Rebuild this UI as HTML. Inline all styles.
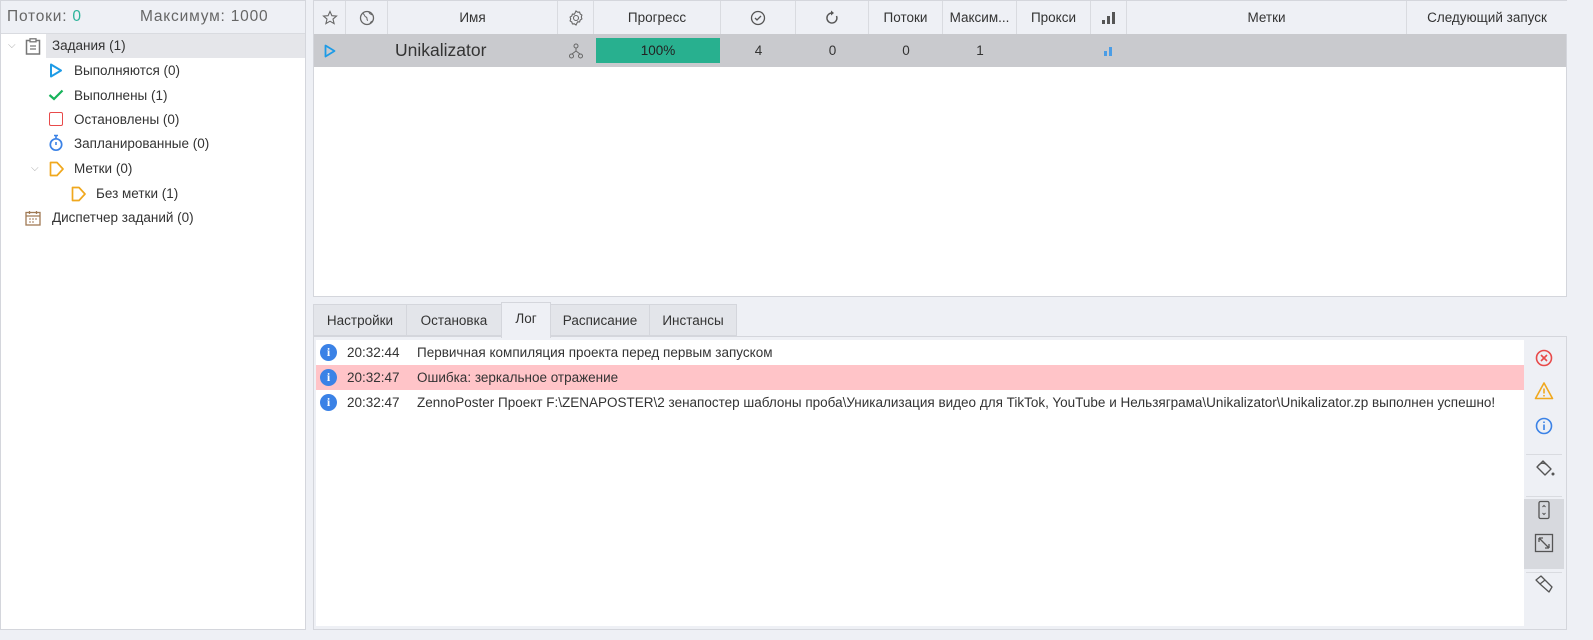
<!DOCTYPE html>
<html><head><meta charset="utf-8"><style>
*{box-sizing:border-box;margin:0;padding:0}
body{width:1593px;height:640px;background:#eef0f5;font-family:"Liberation Sans",sans-serif;font-size:13.5px;color:#333;position:relative;overflow:hidden}
.abs{position:absolute}
#left{left:0;top:0;width:306px;height:630px;border:1px solid #d4d6dc;background:#fff}
#lh{left:1px;top:1px;width:304px;height:33px;background:#eef0f5;border-bottom:1px solid #d9dbe0;font-size:15.5px;color:#666;letter-spacing:.8px}
.ti{position:absolute;height:24px;line-height:24px;font-size:13.5px;color:#333;white-space:nowrap}
#grid{left:313px;top:0;width:1254px;height:297px;border:1px solid #d4d6dc;background:#fff}
.hc{position:absolute;top:0;height:33px;line-height:33px;text-align:center;border-right:1px solid #d9dbe0;background:#eef0f5;font-size:13.5px;color:#333;white-space:nowrap;overflow:hidden}
.rc{position:absolute;top:33px;height:33px;line-height:33px;text-align:center;font-size:13.5px;color:#333}
.tab{position:absolute;top:304px;height:32px;line-height:32px;text-align:center;background:#e3e5ea;border:1px solid #d4d6dc;font-size:13.5px;color:#333}
#log{left:313px;top:336px;width:1254px;height:294px;border:1px solid #d4d6dc;background:#eef0f5}
#lw{left:316px;top:340px;width:1208px;height:286px;background:#fff}
.lr{position:absolute;left:316px;width:1208px;height:24px;line-height:24px;font-size:13.5px;color:#333;white-space:nowrap;overflow:hidden}
.ic{display:inline-block;width:17px;height:17px;border-radius:50%;background:#3b82e6;color:#fff;font-weight:bold;font-size:12px;line-height:17px;text-align:center;position:absolute;left:4px;top:4px;font-family:"Liberation Serif",serif}
</style></head><body>
<div id="left" class="abs"></div>
<div id="lh" class="abs"><span class="abs" style="left:6px;top:7px">Потоки: <span style="color:#2bb39a">0</span></span><span class="abs" style="left:139px;top:7px">Максимум: 1000</span></div>
<div class="abs" style="left:46px;top:34px;width:259px;height:24px;background:#e5e6ea"></div>
<div class="ti" style="left:8px;top:34px;color:#aaa;font-size:10px">⌵</div>
<svg class="abs" style="left:25px;top:38px" width="16" height="17"><rect x="1.5" y="2.5" width="13" height="13.5" fill="none" stroke="#777" stroke-width="1.5"/><rect x="5" y="0.8" width="6" height="3" fill="#fff" stroke="#777" stroke-width="1.3"/><path d="M5 8h6M5 11h6" stroke="#777" stroke-width="1.3"/></svg>
<div class="ti" style="left:52px;top:34px">Задания (1)</div>
<svg class="abs" style="left:49px;top:63px" width="14" height="15"><path d="M2 1.5 L12 7.5 L2 13.5Z" fill="none" stroke="#1e9be6" stroke-width="2" stroke-linejoin="round"/></svg>
<div class="ti" style="left:74px;top:59px">Выполняются (0)</div>
<svg class="abs" style="left:48px;top:89px" width="16" height="12"><path d="M1.5 6 L6 10 L14.5 1.5" fill="none" stroke="#16b35a" stroke-width="2.2"/></svg>
<div class="ti" style="left:74px;top:84px">Выполнены (1)</div>
<div class="abs" style="left:49px;top:112px;width:14px;height:14px;border:1.7px solid #e84a4a;border-radius:2px"></div>
<div class="ti" style="left:74px;top:108px">Остановлены (0)</div>
<svg class="abs" style="left:49px;top:134px" width="14" height="18"><circle cx="7" cy="10.5" r="5.7" fill="none" stroke="#3b82e6" stroke-width="1.7"/><path d="M5 1.5h4M7 2v3M7 8v3" stroke="#3b82e6" stroke-width="1.6"/></svg>
<div class="ti" style="left:74px;top:132px">Запланированные (0)</div>
<div class="ti" style="left:31px;top:157px;color:#aaa;font-size:10px">⌵</div>
<svg class="abs" style="left:49px;top:161px" width="16" height="16"><path d="M1.5 1.5h6.5l6 6.5-6 6.5h-6.5z" fill="none" stroke="#f0a81e" stroke-width="1.7" stroke-linejoin="round"/></svg>
<div class="ti" style="left:74px;top:157px">Метки (0)</div>
<svg class="abs" style="left:71px;top:186px" width="16" height="16"><path d="M1.5 1.5h6.5l6 6.5-6 6.5h-6.5z" fill="none" stroke="#f0a81e" stroke-width="1.7" stroke-linejoin="round"/></svg>
<div class="ti" style="left:96px;top:182px">Без метки (1)</div>
<svg class="abs" style="left:25px;top:210px" width="16" height="16"><rect x="1" y="2.5" width="14" height="12.5" fill="none" stroke="#a07a55" stroke-width="1.3"/><path d="M1 6h14M4.5 1v3M11.5 1v3" stroke="#a07a55" stroke-width="1.3"/><path d="M4 9h2M7 9h2M10 9h2M4 12h2M7 12h2" stroke="#a07a55"/></svg>
<div class="ti" style="left:52px;top:206px">Диспетчер заданий (0)</div>

<div id="grid" class="abs">
<div class="hc" style="left:0;width:32px"><svg width="16" height="16" style="vertical-align:middle"><path d="M8 1.5l1.9 4.2 4.6.4-3.5 3 1.1 4.5L8 11.2l-4.1 2.4 1.1-4.5-3.5-3 4.6-.4z" fill="none" stroke="#666" stroke-width="1.1"/></svg></div>
<div class="hc" style="left:32px;width:42px"><svg width="16" height="16" style="vertical-align:middle"><circle cx="8" cy="8" r="6.5" fill="none" stroke="#666" stroke-width="1.3"/><path d="M4 3.5c2 1 1 3 3 3.5s0 3 2 3.5M10 2c0 2 2 2 3 3M11 14c0-2 2-3 3-3" fill="none" stroke="#666"/></svg></div>
<div class="hc" style="left:74px;width:170px">Имя</div>
<div class="hc" style="left:244px;width:36px"><svg width="16" height="16" style="vertical-align:middle"><path d="M8 1l1.6 1.2 2-.1.6 1.9 1.7 1.1-.6 1.9.6 1.9-1.7 1.1-.6 1.9-2-.1L8 15l-1.6-1.2-2 .1-.6-1.9-1.7-1.1.6-1.9-.6-1.9 1.7-1.1.6-1.9 2 .1z" fill="none" stroke="#666" stroke-width="1.1"/><circle cx="8" cy="8" r="2.5" fill="none" stroke="#666" stroke-width="1.1"/></svg></div>
<div class="hc" style="left:280px;width:127px">Прогресс</div>
<div class="hc" style="left:407px;width:75px"><svg width="16" height="16" style="vertical-align:middle"><circle cx="8" cy="8" r="6.5" fill="none" stroke="#555" stroke-width="1.3"/><path d="M5 8l2 2 4-4" fill="none" stroke="#555" stroke-width="1.3"/></svg></div>
<div class="hc" style="left:482px;width:73px"><svg width="16" height="16" style="vertical-align:middle"><path d="M12.5 6A5 5 0 1 1 8 3" fill="none" stroke="#555" stroke-width="1.4"/><path d="M7 0.5l3 2.5-3 2.5z" fill="#555"/></svg></div>
<div class="hc" style="left:555px;width:74px">Потоки</div>
<div class="hc" style="left:629px;width:74px">Максим...</div>
<div class="hc" style="left:703px;width:74px">Прокси</div>
<div class="hc" style="left:777px;width:36px"><svg width="16" height="14" style="vertical-align:middle"><rect x="1" y="9" width="3" height="4" fill="#555"/><rect x="6" y="5" width="3" height="8" fill="#555"/><rect x="11" y="1" width="3" height="12" fill="#555"/></svg></div>
<div class="hc" style="left:813px;width:280px">Метки</div>
<div class="hc" style="left:1093px;width:160px;border-right:none">Следующий запуск</div>
<div class="abs" style="left:0;top:33px;width:1252px;height:33px;background:#c9cace"></div>
<div class="rc" style="left:0;width:32px"><svg width="12" height="14" style="vertical-align:middle"><path d="M1.5 1.5L10.5 7 1.5 12.5z" fill="none" stroke="#1e9be6" stroke-width="1.8" stroke-linejoin="round"/></svg></div>
<div class="rc" style="left:81px;text-align:left;font-size:17.5px;color:#333">Unikalizator</div>
<div class="rc" style="left:244px;width:36px"><svg width="14" height="16" style="vertical-align:middle"><circle cx="7" cy="3" r="2" fill="none" stroke="#666"/><circle cx="2.5" cy="13" r="2" fill="none" stroke="#666"/><circle cx="11.5" cy="13" r="2" fill="none" stroke="#666"/><path d="M7 5v3M7 8L3 11M7 8l4 3" stroke="#666"/></svg></div>
<div class="abs" style="left:282px;top:37px;width:124px;height:25px;background:#28b08f;text-align:center;line-height:25px;font-size:13.5px;color:#222">100%</div>
<div class="rc" style="left:407px;width:75px">4</div>
<div class="rc" style="left:482px;width:73px">0</div>
<div class="rc" style="left:555px;width:74px">0</div>
<div class="rc" style="left:629px;width:74px">1</div>
<div class="rc" style="left:777px;width:36px"><svg width="10" height="10" style="vertical-align:middle"><rect x="0" y="5" width="3" height="5" fill="#4a9de6"/><rect x="5" y="1" width="3" height="9" fill="#4a9de6"/></svg></div>
</div>

<div class="tab" style="left:313px;width:94px">Настройки</div>
<div class="tab" style="left:406px;width:96px">Остановка</div>
<div class="tab" style="left:550px;width:100px">Расписание</div>
<div class="tab" style="left:649px;width:88px">Инстансы</div>
<div id="log" class="abs"></div>
<div class="tab" style="left:501px;width:50px;top:302px;height:36px;background:#eef0f5;border-bottom:none">Лог</div>
<div id="lw" class="abs"></div>
<div class="lr" style="top:340px;height:25px;line-height:25px"><span class="ic">i</span><span style="position:absolute;left:31px">20:32:44</span><span style="position:absolute;left:101px">Первичная компиляция проекта перед первым запуском</span></div>
<div class="lr" style="top:365px;height:25px;line-height:25px;background:#ffc4c8"><span class="ic">i</span><span style="position:absolute;left:31px">20:32:47</span><span style="position:absolute;left:101px">Ошибка: зеркальное отражение</span></div>
<div class="lr" style="top:390px;height:25px;line-height:25px"><span class="ic">i</span><span style="position:absolute;left:31px">20:32:47</span><span style="position:absolute;left:101px">ZennoPoster Проект F:\ZENAPOSTER\2 зенапостер шаблоны проба\Уникализация видео для TikTok, YouTube и Нельзяграма\Unikalizator\Unikalizator.zp выполнен успешно!</span></div>

<svg class="abs" style="left:1534px;top:348px" width="20" height="20"><circle cx="10" cy="10" r="7.5" fill="none" stroke="#e84a4a" stroke-width="1.6"/><path d="M7 7l6 6M13 7l-6 6" stroke="#e84a4a" stroke-width="1.6"/></svg>
<svg class="abs" style="left:1534px;top:381px" width="20" height="20"><path d="M10 2L18.5 17.5H1.5z" fill="none" stroke="#f0a81e" stroke-width="1.6" stroke-linejoin="round"/><path d="M10 7.5v5M10 14v1.5" stroke="#f0a81e" stroke-width="1.6"/></svg>
<svg class="abs" style="left:1534px;top:416px" width="20" height="20"><circle cx="10" cy="10" r="7.5" fill="none" stroke="#3b82e6" stroke-width="1.6"/><path d="M10 8.5v5.5M10 5.5v1.5" stroke="#3b82e6" stroke-width="1.6"/></svg>
<div class="abs" style="left:1526px;top:454px;width:36px;height:1px;background:#d9dbe0"></div>
<svg class="abs" style="left:1534px;top:457px" width="22" height="22"><path d="M3 10l6-6 8 8-6 6z" fill="none" stroke="#555" stroke-width="1.4" stroke-linejoin="round"/><path d="M4 9c2-3 6-4 9-1" fill="none" stroke="#555" stroke-width="1.3"/><circle cx="19" cy="17" r="1.5" fill="#555"/></svg>
<div class="abs" style="left:1526px;top:496px;width:36px;height:1px;background:#d9dbe0"></div>
<div class="abs" style="left:1524px;top:499px;width:40px;height:70px;background:#d7d9de"></div>
<svg class="abs" style="left:1534px;top:500px" width="20" height="20"><rect x="5" y="1.5" width="10" height="17" rx="1.5" fill="none" stroke="#555" stroke-width="1.3"/><path d="M8.5 7l1.5-1.5L11.5 7M8.5 13l1.5 1.5 1.5-1.5" fill="none" stroke="#555"/></svg>
<svg class="abs" style="left:1534px;top:533px" width="20" height="20"><rect x="1.5" y="1.5" width="17" height="17" fill="none" stroke="#555" stroke-width="1.3"/><path d="M5 5l10 10M5 5h4M5 5v4M15 15h-4M15 15v-4" fill="none" stroke="#555" stroke-width="1.3"/></svg>
<div class="abs" style="left:1526px;top:572px;width:36px;height:1px;background:#d9dbe0"></div>
<svg class="abs" style="left:1534px;top:574px" width="20" height="20"><path d="M2 6l5-4 4 4-5 4zM6 10l5-4 7 7-3 5z" fill="none" stroke="#555" stroke-width="1.3" stroke-linejoin="round"/></svg>
</body></html>
